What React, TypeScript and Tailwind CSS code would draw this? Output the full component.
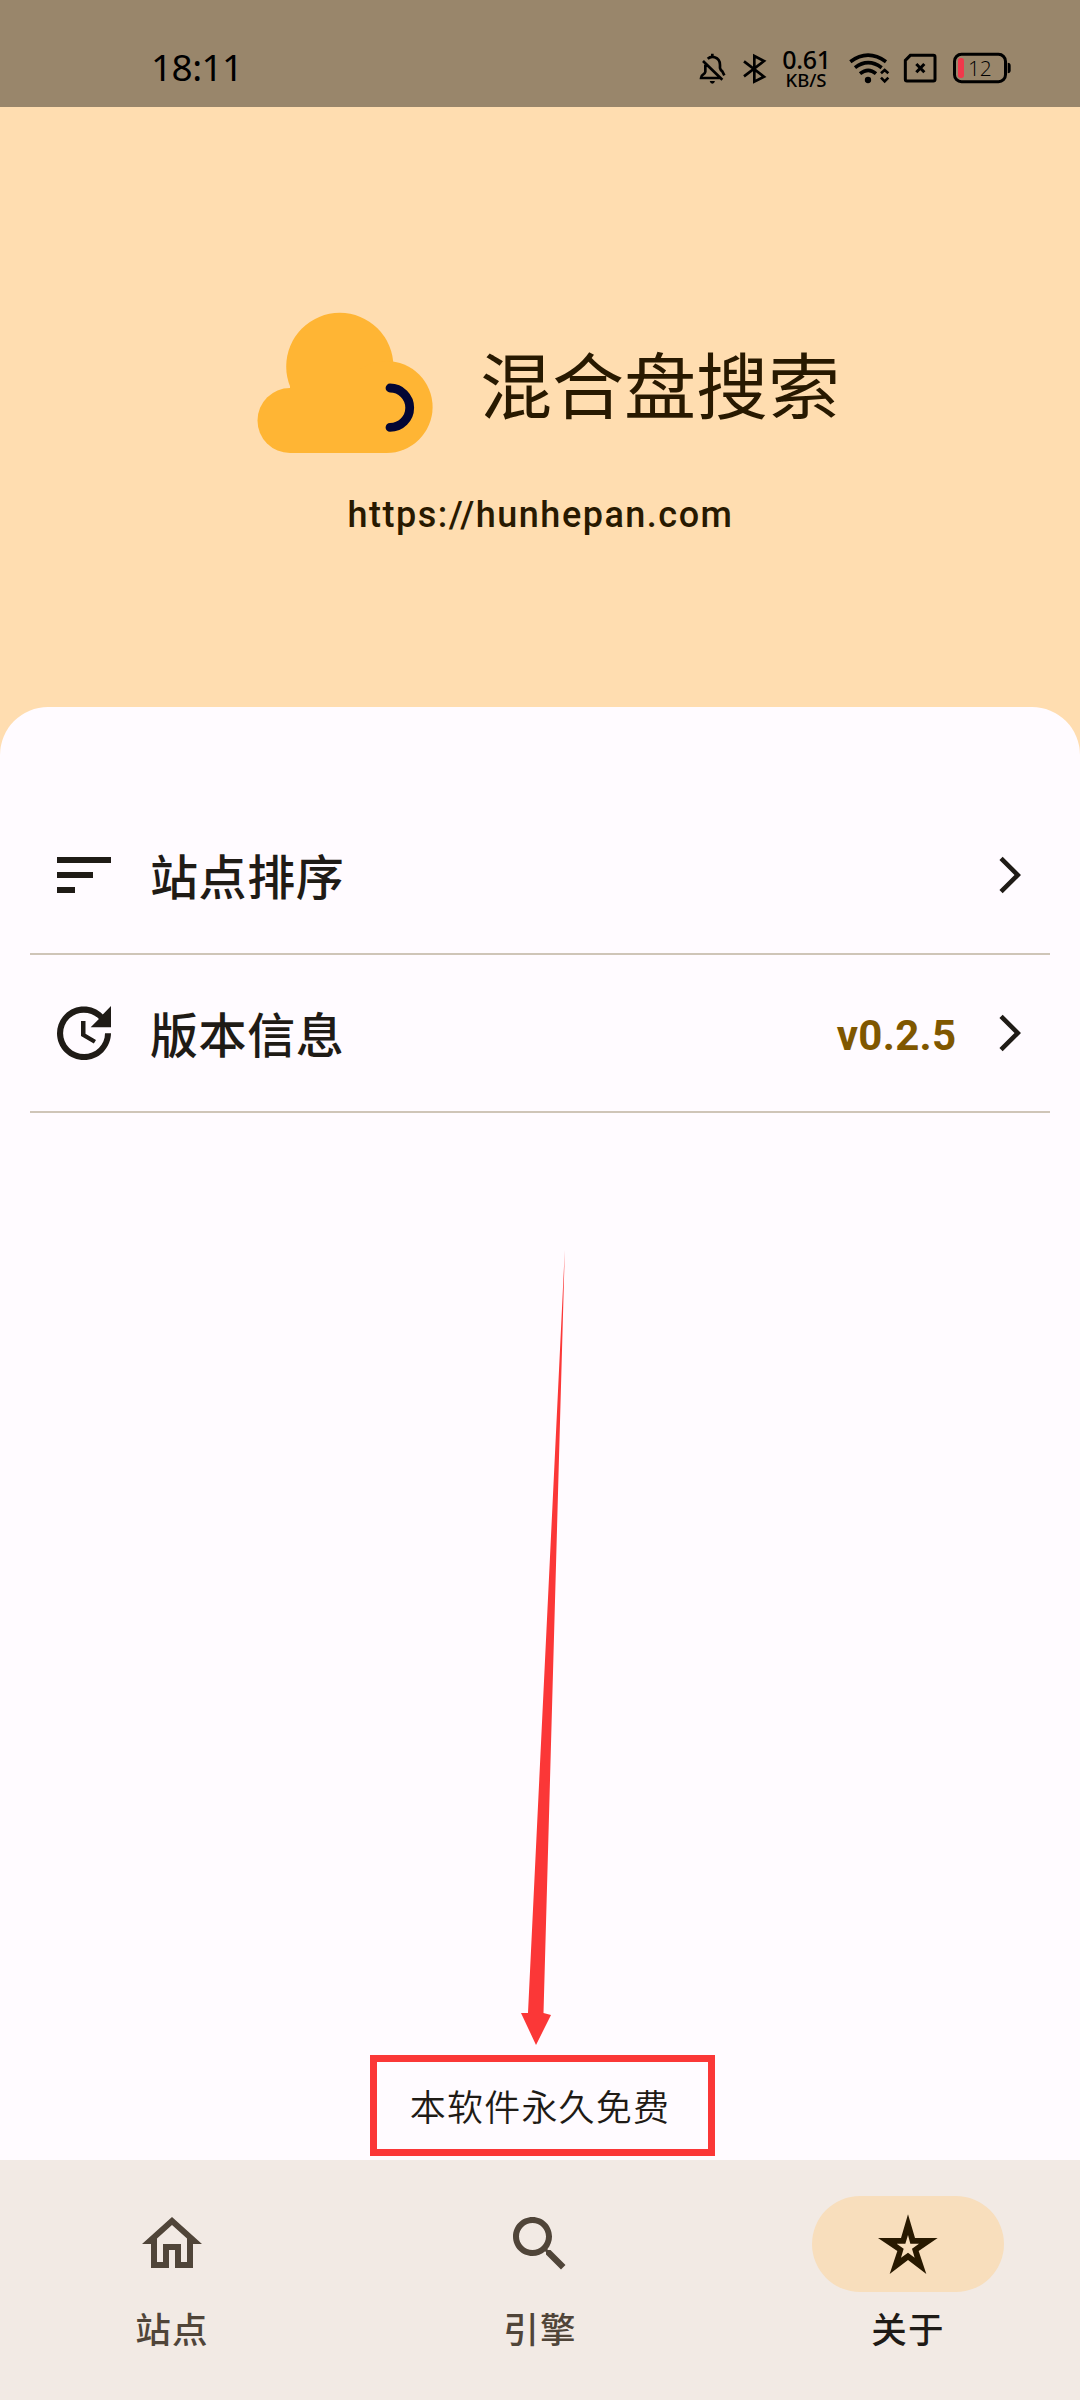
import type { ReactNode } from "react";

function StatusBar() {
  return (
    <header className="flex h-[107px] shrink-0 items-start justify-between bg-[#99866b] pl-[151px] pr-[68px] text-black">
      <div className="mt-[43px] font-['Noto_Sans','Noto_Sans_CJK_SC',sans-serif] text-[37px] font-normal leading-[48px] tracking-[-0.6px]">18:11</div>
      <div className="mt-[50px] flex h-10 items-start">
        {/* muted bell */}
        <svg className="mr-[14px] h-10 w-[30px]" viewBox="54 60 90 120" fill="none" stroke="#000" strokeWidth="8">
          <path d="M97 71v10M83 86c6-5 14-7 21-4 12 4 16 11 16 23v9q1 6 7 10l6 12M69 93l58 56M76 104v21q-1 5-6 8-7 4-7 11h57" />
          <path d="M89 153h16q-2 8-8 8t-8-8z" fill="#000" stroke="none" />
        </svg>
        {/* bluetooth */}
        <svg className="mr-4 h-10 w-[25px]" viewBox="186 60 75 120" fill="none" stroke="#000" strokeWidth="8">
          <path d="M192 94l60 46-29 15V78l29 15-60 46" />
        </svg>
        <div className="mr-5 flex w-[46px] flex-col items-center font-['Noto_Sans',sans-serif]">
          <span className="-mt-[2px] ml-px text-[25px] font-medium leading-[22px] tracking-[-0.3px]">0.61</span>
          <span className="mt-px text-[18.5px] font-medium leading-[17px]">KB/S</span>
        </div>
        {/* wifi with traffic arrows */}
        <svg className="mr-[13px] h-10 w-[41px]" viewBox="507 60 123 120" fill="none" stroke="#000" strokeWidth="11">
          <path d="M511 95q53-39 107 0M525 113q39-30 80 0M540 131q25-20 48 0" />
          <circle cx="564" cy="150" r="9.5" fill="#000" stroke="none" />
          <path d="M603 130l11-10 11 10M603 143l11 11 11-11" strokeWidth="8" />
        </svg>
        {/* empty sim */}
        <svg className="mr-[15px] h-10 w-[34px]" viewBox="669 60 102 120" fill="none" stroke="#000" strokeWidth="9">
          <path d="M691 76h69q5 0 5 5v67q0 5-5 5h-79q-5 0-5-5V91z" />
          <path d="M709 102l24 25M733 102l-24 25" />
        </svg>
        {/* battery */}
        <div className="relative h-10 w-[60px]">
          <svg className="h-10 w-[60px]" viewBox="816 60 180 120" fill="none">
            <rect x="823.5" y="73" width="153" height="82" rx="21" stroke="#000" strokeWidth="9" />
            <rect x="834" y="84" width="18" height="60" rx="8" fill="#f0384b" />
            <path d="M983 98q9 0 9 9v14q0 9-9 9z" fill="#000" />
          </svg>
          <span className="absolute left-[16px] top-[6px] font-['Open_Sans',sans-serif] text-[21px] font-light leading-[24px] tracking-[-0.3px]">12</span>
        </div>
      </div>
    </header>
  );
}

function CloudLogo() {
  return (
    <svg className="h-[142px] w-[176px]" viewBox="257 312 176 142">
      <g fill="#ffb534">
        <circle cx="339.8" cy="366.4" r="53.6" />
        <circle cx="386.6" cy="407" r="46" />
        <circle cx="290" cy="420.5" r="32.5" />
        <path d="M290 388L290 370H386V453H290z" />
      </g>
      <path d="M390 388a19.7 19.7 0 0 1 0 39.4" fill="none" stroke="#030634" strokeWidth="8.8" strokeLinecap="round" />
    </svg>
  );
}

function Chevron() {
  return (
    <svg className="h-11 w-11" viewBox="0 0 24 24" fill="#1f1b16">
      <path d="M6.23 20.23L8 22l10-10L8 2 6.23 3.77 14.46 12z" />
    </svg>
  );
}

function Row({ icon, label, value }: { icon: string; label: string; value?: string }) {
  return (
    <div className="mx-[30px] flex h-[158px] items-center border-b-2 border-[#cfc5b8] pl-[18px] pr-[18.5px]">
      <svg className="h-[72px] w-[72px]" viewBox="0 0 24 24" fill="#1f1b16">
        <path d={icon} />
      </svg>
      <span className="mb-[3px] ml-[30px] text-[48px] font-medium leading-[72px] tracking-[0.6px]">{label}</span>
      <span className="ml-auto mr-[31px] mt-[5px] font-['Roboto',sans-serif] text-[42px] font-bold leading-[60px] tracking-[0.3px] text-[#7f5700]">{value}</span>
      <Chevron />
    </div>
  );
}

function NavItem({ label, active, children }: { label: string; active?: boolean; children: ReactNode }) {
  return (
    <div className={active ? "flex flex-1 flex-col items-center pt-9 text-[#1f1b16]" : "flex flex-1 flex-col items-center pt-9 text-[#504539]"}>
      <div className={active ? "flex h-24 w-48 items-center justify-center rounded-full bg-[#f8debc]" : "flex h-24 w-48 items-center justify-center"}>
        {children}
      </div>
      <span className="mt-3 text-[35.5px] font-medium leading-[48px] tracking-[1.2px]">{label}</span>
    </div>
  );
}

const SORT = "M3 18h6v-2H3v2zM3 6v2h18V6H3zm0 7h12v-2H3v2z";
const UPDATE =
  "M21 10.12h-6.78l2.74-2.82c-2.73-2.7-7.15-2.8-9.88-.1-2.73 2.71-2.73 7.08 0 9.79s7.15 2.71 9.88 0C18.32 15.65 19 14.08 19 12.1h2c0 1.98-.88 4.55-2.64 6.29-3.51 3.48-9.21 3.48-12.72 0-3.5-3.47-3.53-9.11-.02-12.58s9.14-3.47 12.65 0L21 3v7.12zM12.5 8v4.25l3.5 2.08-.72 1.21L11 13V8h1.5z";

export default function App() {
  return (
    <div className="relative flex h-[2400px] w-[1080px] flex-col overflow-hidden bg-[#ffddb0] font-['Noto_Sans_CJK_SC',sans-serif] text-[#1f1b16]">
      <StatusBar />
      <section className="flex h-[600px] shrink-0 flex-col items-center pt-[205px] text-[#281900]">
        <div className="flex items-center pl-[17px]">
          <CloudLogo />
          <h1 className="mb-[2px] ml-[47px] text-[72px] leading-[96px]">混合盘搜索</h1>
        </div>
        <p className="mt-[37px] pl-px font-['Roboto',sans-serif] text-[36px] font-medium leading-[48px] tracking-[1.5px]">https://hunhepan.com</p>
      </section>
      <main className="flex flex-1 flex-col items-center rounded-t-[48px] bg-[#fffbff] pt-[90px]">
        <div className="w-full">
          <Row icon={SORT} label="站点排序" />
          <Row icon={UPDATE} label="版本信息" value="v0.2.5" />
        </div>
        <div className="mb-1 ml-[5px] mt-auto flex h-[101px] w-[345px] items-center justify-center border-[7px] border-[#fb3737]">
          <p className="mb-px mr-[5px] text-[36px] font-[350] leading-[48px] tracking-[1.2px]">本软件永久免费</p>
        </div>
      </main>
      <nav className="flex h-60 shrink-0 gap-6 bg-[#f2eae4]">
        <NavItem label="站点">
          <svg className="h-[72px] w-[72px]" viewBox="0 0 24 24" fill="currentColor">
            <path d="M12 5.69l5 4.5V18h-2v-6H9v6H7v-7.81l5-4.5M12 3L2 12h3v8h6v-6h2v6h6v-8h3L12 3z" />
          </svg>
        </NavItem>
        <NavItem label="引擎">
          <svg className="h-[72px] w-[72px]" viewBox="0 0 24 24" fill="currentColor">
            <path d="M15.5 14h-.79l-.28-.27C15.41 12.59 16 11.11 16 9.5 16 5.91 13.09 3 9.5 3S3 5.91 3 9.5 5.91 16 9.5 16c1.61 0 3.09-.59 4.23-1.57l.27.28v.79l5 4.99L20.49 19l-4.99-5zm-6 0C7.01 14 5 11.99 5 9.5S7.01 5 9.5 5 14 7.01 14 9.5 11.99 14 9.5 14z" />
          </svg>
        </NavItem>
        <NavItem label="关于" active>
          <svg className="h-[72px] w-[72px]" viewBox="276 204 216 216" fill="#281900" fillRule="evenodd">
            <path d="M384 223L405 294H473L416 333L439 402L384 360L329 402L352 333L294 294H363ZM384 285L376 311H350L371 326L363 353L384 338L404 353L396 326L417 311H391Z" />
          </svg>
        </NavItem>
      </nav>
      {/* annotation arrow pointing at the boxed note */}
      <svg className="pointer-events-none absolute left-[516px] top-[1250px] h-[796px] w-[54px]" viewBox="516 1250 54 796" fill="#fb3737">
        <path d="M564.8 1250L543.5 2013L551 2015L536 2045L521 2013H528Z" />
      </svg>
    </div>
  );
}
